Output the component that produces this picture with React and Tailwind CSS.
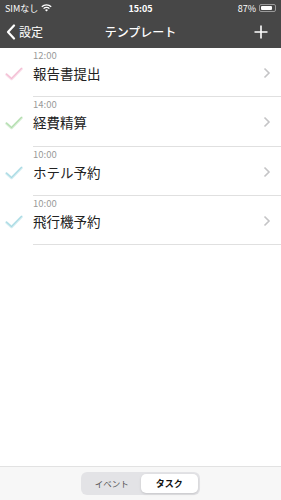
import React from 'react';

const font = { fontFamily: '"Noto Sans CJK JP", "Noto Sans", sans-serif' };

const items = [
  { time: '12:00', title: '報告書提出', color: '#f2b6cf' },
  { time: '14:00', title: '経費精算', color: '#a9d9a4' },
  { time: '10:00', title: 'ホテル予約', color: '#9fd6e0' },
  { time: '10:00', title: '飛行機予約', color: '#9fd6e0' },
];

function Check({ color }) {
  return (
    <svg width="18" height="14" viewBox="0 0 18 14" className="shrink-0 block">
      <path d="M1.5 7.5 L6.5 12 L16.5 1.8" fill="none" stroke={color} strokeWidth="2.6" strokeLinecap="round" strokeLinejoin="round" opacity="0.45" />
      <path d="M1.5 7.2 L6.5 11.6 L16.5 1.4" fill="none" stroke={color} strokeWidth="1.1" strokeLinecap="round" strokeLinejoin="round" opacity="0.85" />
    </svg>
  );
}

function Row({ item }) {
  return (
    <div className="flex h-[49.3px] pl-[5px]">
      <div className="w-[28px] pt-[19px]">
        <Check color={item.color} />
      </div>
      <div className="flex-1 h-full flex border-b border-[#e0e0e0] pr-[10px]">
        <div className="flex-1 flex flex-col pt-[2px]">
          <span className="text-[9.5px] leading-[11px] text-[#9a9a9a]">{item.time}</span>
          <span className="text-[13.5px] leading-[18px] text-[#222] mt-[3px]">{item.title}</span>
        </div>
        <div className="pt-[19px]">
          <svg width="8" height="12" viewBox="0 0 8 12" className="block">
            <path d="M1.5 1.5 L6 6 L1.5 10.5" fill="none" stroke="#c4c4c6" strokeWidth="1.6" />
          </svg>
        </div>
      </div>
    </div>
  );
}

export default function App() {
  return (
    <div className="w-[281px] h-[500px] flex flex-col bg-white overflow-hidden" style={font}>
      <div className="bg-[#474747] text-white">
        {/* status bar */}
        <div className="h-[16px] flex items-center justify-between px-[5px] text-[9px] leading-none relative">
          <div className="flex items-center gap-[3px]">
            <span>SIMなし</span>
            <svg width="11" height="8" viewBox="0 0 11 8">
              <path d="M0.8 2.8 A6.5 6.5 0 0 1 10.2 2.8" fill="none" stroke="white" strokeWidth="1.3" />
              <path d="M2.6 4.6 A4 4 0 0 1 8.4 4.6" fill="none" stroke="white" strokeWidth="1.3" />
              <path d="M5.5 7.6 L4 6.1 A2 2 0 0 1 7 6.1 Z" fill="white" />
            </svg>
          </div>
          <span className="absolute left-1/2 -translate-x-1/2 font-semibold">15:05</span>
          <div className="flex items-center gap-[3px]">
            <span>87%</span>
            <div className="w-[17px] h-[8px] border border-[#9a9a9a] rounded-[2px] p-[1px] flex">
              <div className="w-[87%] h-full bg-white rounded-[1px]" />
            </div>
          </div>
        </div>
        {/* nav bar */}
        <div className="h-[32px] flex items-center justify-between relative px-[6px]">
          <div className="flex items-center gap-[3px]">
            <svg width="10" height="16" viewBox="0 0 10 16">
              <path d="M8 1.5 L2 8 L8 14.5" fill="none" stroke="white" strokeWidth="2.2" strokeLinecap="round" strokeLinejoin="round" />
            </svg>
            <span className="text-[12px]">設定</span>
          </div>
          <span className="absolute left-1/2 -translate-x-1/2 text-[12px] font-medium">テンプレート</span>
          <svg width="14" height="14" viewBox="0 0 14 14" className="mr-[7px]">
            <path d="M7 0.5 V13.5 M0.5 7 H13.5" stroke="white" strokeWidth="1.6" />
          </svg>
        </div>
      </div>

      <div className="flex-1">
        {items.map((it, i) => (
          <Row key={i} item={it} />
        ))}
      </div>

      <div className="h-[34px] bg-[#f7f7f7] border-t border-[#e2e2e2] flex items-center justify-center">
        <div className="w-[119px] h-[23px] bg-[#e3e3e6] rounded-[6px] p-[2px] flex">
          <div className="flex-1 flex items-center justify-center text-[8.5px] text-[#555]">イベント</div>
          <div className="flex-1 flex items-center justify-center bg-white rounded-[5px] shadow-sm text-[9px] font-bold text-[#111]">タスク</div>
        </div>
      </div>
    </div>
  );
}
